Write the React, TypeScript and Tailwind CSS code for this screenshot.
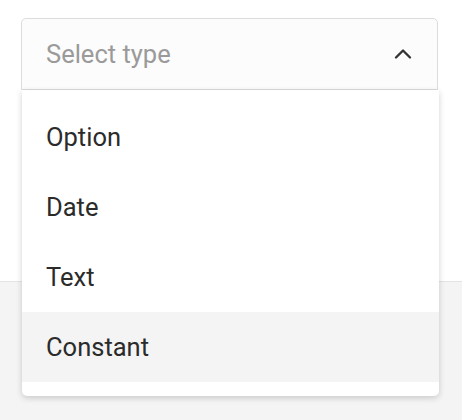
import { ChevronUp } from "lucide-react";

const options = ["Option", "Date", "Text", "Constant"];

export default function App() {
  return (
    <div className="min-h-[420px] bg-[#f4f4f4] font-['Roboto',sans-serif]">
      <div className="h-[282px] bg-white border-b border-[#e4e4e4] px-[21px] pt-[18px]">
        <div className="relative w-[417px]">
          <div className="flex h-[72px] items-center justify-between rounded-t-[5px] border border-[#dcdcdc] bg-[#fcfcfc] pl-[24px] pr-[20px]">
            <span className="text-[25.5px] text-[#9a9a9a]">Select type</span>
            <ChevronUp className="h-7 w-7 text-[#333]" strokeWidth={2} />
          </div>
          <div className="absolute left-[1px] right-[-1px] top-full rounded-b-[5px] bg-white pt-[12px] pb-[14px] shadow-[0_2px_6px_rgba(0,0,0,0.18)]">
            {options.map((o) => (
              <div
                key={o}
                className={`flex h-[70px] items-center pl-[24px] text-[25.5px] text-[#2b2b2b] ${o === "Constant" ? "bg-[#f4f4f4]" : ""}`}
              >
                {o}
              </div>
            ))}
          </div>
        </div>
      </div>
    </div>
  );
}
